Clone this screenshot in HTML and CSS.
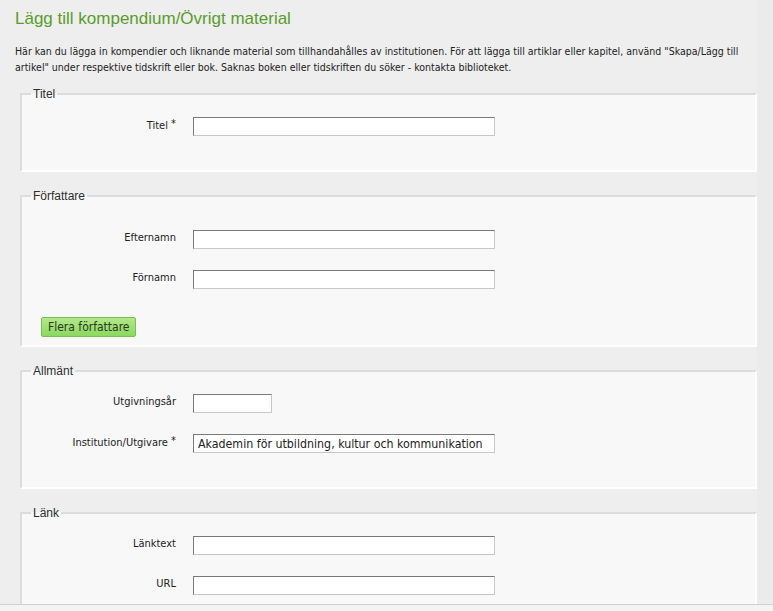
FILE: index.html
```html
<!DOCTYPE html>
<html lang="sv">
<head>
  <meta charset="UTF-8" />
  <meta name="viewport" content="width=device-width, initial-scale=1.0" />
  <title>Lägg till kompendium/Övrigt material</title>
  <link rel="stylesheet" href="styles.css">
</head>
<body>
  <div class="frame">
    <div class="content">
      <h1>Lägg till kompendium/Övrigt material</h1>
      <p class="intro">Här kan du lägga in kompendier och liknande material som tillhandahålles av institutionen. För att lägga till artiklar eller kapitel, använd "Skapa/Lägg till artikel" under respektive tidskrift eller bok. Saknas boken eller tidskriften du söker - kontakta biblioteket.</p>

      <form>
        <fieldset>
          <legend>Titel</legend>
          <div class="rows">
            <div class="row">
              <label for="title">Titel <span class="req">*</span></label>
              <input type="text" id="title" />
            </div>
          </div>
        </fieldset>

        <fieldset class="authors">
          <legend>Författare</legend>
          <div class="rows short">
            <div class="row">
              <label for="lastname">Efternamn</label>
              <input type="text" id="lastname" />
            </div>
            <div class="row">
              <label for="firstname">Förnamn</label>
              <input type="text" id="firstname" />
            </div>
          </div>
          <button type="button" class="btn-green">Flera författare</button>
        </fieldset>

        <fieldset>
          <legend>Allmänt</legend>
          <div class="rows">
            <div class="row">
              <label for="year">Utgivningsår</label>
              <input type="text" id="year" class="small" />
            </div>
            <div class="row">
              <label for="publisher">Institution/Utgivare <span class="req">*</span></label>
              <input type="text" id="publisher" value="Akademin för utbildning, kultur och kommunikation" />
            </div>
          </div>
        </fieldset>

        <fieldset>
          <legend>Länk</legend>
          <div class="rows">
            <div class="row">
              <label for="linktext">Länktext</label>
              <input type="text" id="linktext" />
            </div>
            <div class="row">
              <label for="url">URL</label>
              <input type="text" id="url" />
            </div>
          </div>
        </fieldset>
      </form>
    </div>
  </div>
</body>
</html>
```

FILE: styles.css
```css
* { box-sizing: border-box; }
html, body {
  margin: 0;
  height: 100%;
}
body {
  background-color: #f4f4f4;
  font-family: "DejaVu Sans Condensed", "DejaVu Sans", sans-serif;
  font-size: 11px;
  color: #222;
}
.frame {
  height: 605px;
  overflow: hidden;
  background-color: #ebebeb;
  border-bottom: 1px solid #cfcfcf;
}
.content {
  width: 757px;
  height: 100%;
  background-color: #eeeeee;
  padding: 9px 0 0 15px;
}
h1 {
  margin: 0;
  font-family: "Liberation Sans", Arial, sans-serif;
  font-weight: normal;
  font-size: 17px;
  color: #5a9c2c;
}
.intro {
  margin: 14px 0 0;
  font-size: 10.5px;
  line-height: 16px;
}
form {
  margin-top: 12px;
}
fieldset {
  margin: 0 0 17px 5px;
  width: 737px;
  padding: 16px 0 9px 9px;
  border-style: solid;
  border-width: 2px;
  border-color: #dcdcdc #ffffff #ffffff #dcdcdc;
  background-color: #f8f8f8;
}
fieldset.authors {
  padding-top: 27px;
  padding-bottom: 8px;
}
legend {
  padding: 0 2px;
  font-family: "Liberation Sans", Arial, sans-serif;
  font-size: 12px;
  line-height: 14px;
  color: #2e2e2e;
}
.rows {
  display: flex;
  flex-direction: column;
  gap: 21px;
  padding-bottom: 25px;
}
.rows.short {
  padding-bottom: 0;
}
.row {
  display: flex;
  align-items: center;
  gap: 17px;
}
.row label {
  width: 145px;
  text-align: right;
  margin-top: -4px;
}
.req {
  vertical-align: 2px;
}
.row input {
  width: 302px;
  height: 19px;
  margin: 0;
  padding: 1px 4px 0;
  border: 1px solid #c8c8c8;
  border-top-color: #7a7a7a;
  border-left-color: #7a7a7a;
  background: #fff;
  font-family: "DejaVu Sans Condensed", "DejaVu Sans", sans-serif;
  font-size: 12.3px;
  color: #222;
}
.row input.small {
  width: 79px;
}
.btn-green {
  margin: 28px 0 0 10px;
  height: 20px;
  padding: 0 6px;
  border: 1px solid #7cbf4f;
  border-radius: 2px;
  background: linear-gradient(#b3e88c, #8ad85f);
  font-family: "DejaVu Sans Condensed", "DejaVu Sans", sans-serif;
  font-size: 12px;
  color: #2a3a20;
}
```
